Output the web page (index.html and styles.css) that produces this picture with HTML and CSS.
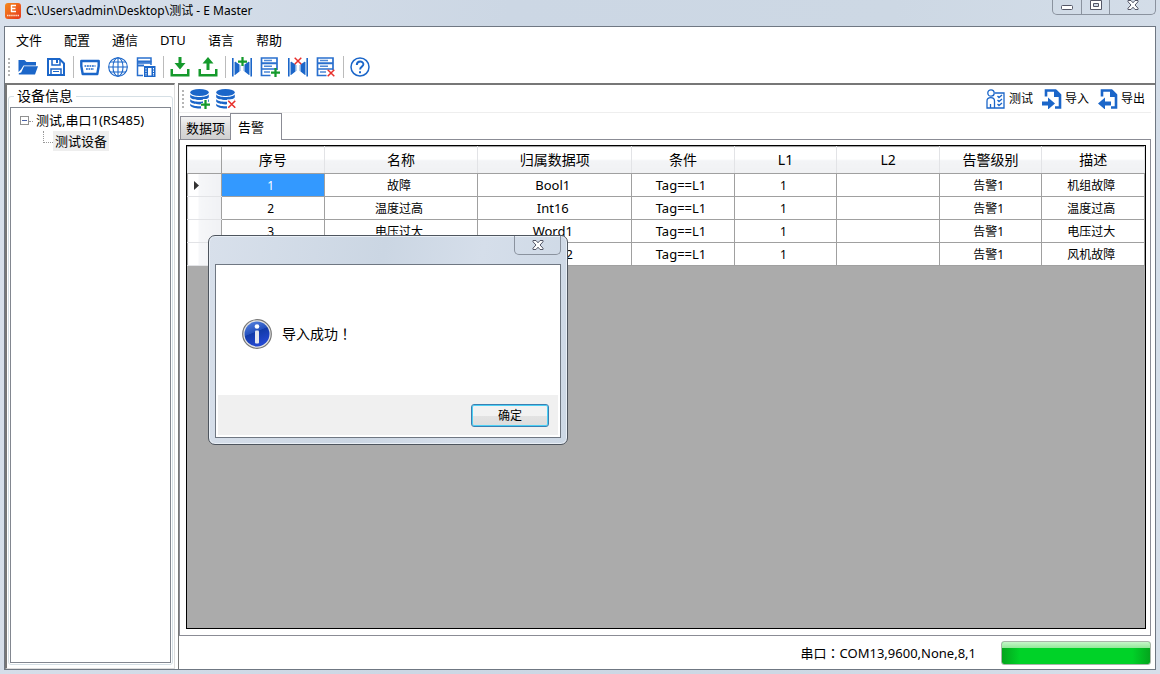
FILE: index.html
```html
<!DOCTYPE html>
<html lang="zh-CN">
<head>
<meta charset="utf-8">
<title>E Master</title>
<link rel="stylesheet" href="styles.css">
</head>
<body>
<svg class="defs" aria-hidden="true">
  <symbol id="plus" viewBox="0 0 8 8"><path d="M3 0h2v3h3v2H5v3H3V5H0V3h3z" fill="#159a2c"/></symbol>
  <symbol id="cross" viewBox="0 0 8 8"><path d="M.7.7l6.6 6.6M7.3.7L.7 7.3" stroke="#e8302c" stroke-width="1.5"/></symbol>
  <symbol id="db" viewBox="0 0 20 20">
    <ellipse cx="9.500" cy="3.500" rx="9.300" ry="3.400" fill="#1b66c9"/>
    <path d="M.2 5.200c2 3.700 16.600 3.700 18.600 0v3c-2 3.700-16.600 3.700-18.600 0zM.2 10c2 3.700 16.600 3.700 18.600 0v2.600c-2 3.700-16.600 3.700-18.600 0zM.2 14.500c2 3.700 16.600 3.700 18.600 0v2c-2 4-16.600 4-18.600 0z" fill="#1b66c9"/>
  </symbol>
  <symbol id="link" viewBox="0 0 20 20">
    <path d="M0 1h1.600v18.500H0zM18.400 1H20v18.500h-1.600zM3 4.500l4.500 3v7L3 18zM17 4.500l-4.500 3v7L17 18z" fill="#1b66c9"/>
    <path d="M2.300 5v13M17.700 5v13M8 8v6M12 8v6" stroke="#78a8e3"/>
  </symbol>
  <symbol id="rows" viewBox="0 0 20 20">
    <path d="M1.500 1h15.500v5H1.500zM1.500 6.500h15.500v5.500H1.500zM1.500 12.500v6h9M17 11v2" fill="none" stroke="#2a70ce" stroke-width="1.700"/>
    <path d="M4 3.500h8M4 9.200h8M4 15h6" stroke="#4d88d6" stroke-width="1.500"/>
  </symbol>
  <symbol id="page" viewBox="0 0 20 20">
    <path d="M4 7.500V1.500h9.500L18 6v12.500h-5" fill="none" stroke="#1b66c9" stroke-width="2.600"/>
    <path d="M12 1h2.500L19 5.500V8h-7z" fill="#1b66c9"/>
  </symbol>
  <symbol id="close" viewBox="0 0 12 10">
    <path d="M1 .5h3l2 2.300L8 .5h3v1.300L8 5l3 3.200v1.300H8L6 7.200 4 9.500H1V8.200L4 5 1 1.800z" fill="#fff" stroke="#535666"/>
  </symbol>
</svg>
<div class="window">
  <header class="titlebar">
    <svg class="app-logo" viewBox="0 0 16 16" aria-hidden="true"><defs><linearGradient id="orange" x2="1" y2="1"><stop stop-color="#f48a1c"/><stop offset="1" stop-color="#e6361e"/></linearGradient></defs><rect width="16" height="16" rx="3" fill="url(#orange)"/><path d="M6 2.500h5M6 5.500h4.500M6 8.500h5M6.500 2v7" stroke="#fff" stroke-width="1.400"/><path d="M2 12.500h12" stroke="#ffdcc8" stroke-width="1.500" stroke-dasharray="1.500 .6"/></svg>
    <h1 class="title">C:\Users\admin\Desktop\测试 - E Master</h1>
    <div class="caption">
      <button type="button" aria-label="最小化"><svg width="12" height="6" viewBox="0 0 12 6"><rect x=".5" y=".5" width="11" height="4" rx="1" fill="#fff" stroke="#535666"/></svg></button>
      <button type="button" aria-label="最大化"><svg width="12" height="10" viewBox="0 0 12 10"><path d="M.5.5h11v9H.5zM3.500 3.500v3h5v-3z" fill="#fff" fill-rule="evenodd" stroke="#535666"/></svg></button>
      <button type="button" class="wide" aria-label="关闭"><svg width="12" height="10"><use href="#close"/></svg></button>
    </div>
  </header>
  <div class="client">
    <nav class="menu">
      <button type="button">文件</button><button type="button">配置</button><button type="button">通信</button><button type="button">DTU</button><button type="button">语言</button><button type="button">帮助</button>
    </nav>
    <div class="toolbar" role="toolbar">
      <span class="grip"></span>
      <button type="button" aria-label="打开"><svg viewBox="0 0 20 20"><path d="M.5 3h6l2 2h9.500v3.500H5.500L3 12.500.5 15z" fill="#1b66c9"/><path d="M6 9.300h14L17 17.500H.8v-1.200l2.400-.8z" fill="#1b66c9"/></svg></button>
      <button type="button" aria-label="保存"><svg viewBox="0 0 20 20"><path d="M2 2h11.500L18 6.500V18H2z" fill="none" stroke="#1b66c9" stroke-width="2"/><path d="M6 2v6h8V2M5 18v-6h10v6" fill="none" stroke="#1b66c9" stroke-width="1.500"/><path d="M10 3h2v3h-2zM7 14h6v1H7z" fill="#1b66c9"/></svg></button>
      <span class="sep"></span>
      <button type="button" aria-label="串口"><svg viewBox="0 0 20 20"><path d="M1.300 4h17.400v5l-1.400 8H2.700L1.300 9z" fill="#fff" stroke="#1b66c9" stroke-width="2.400" stroke-linejoin="round"/><path d="M4.500 9h11M6 12h8" stroke="#1b66c9" stroke-width="1.500" stroke-dasharray="1.800 .7"/></svg></button>
      <button type="button" aria-label="网络"><svg viewBox="0 0 20 20" fill="none" stroke="#1b66c9" stroke-width="1.100"><circle cx="10" cy="10" r="9.300"/><ellipse cx="10" cy="10" rx="5" ry="9.300"/><path d="M10 .7v18.600M.7 10h18.600M2.200 5h15.600M2.200 15h15.600"/></svg></button>
      <button type="button" aria-label="模板"><svg viewBox="0 0 20 20"><path d="M1.500 1h13.500v5H1.500zM1.500 6v12.500h5.500M15 5v3" fill="none" stroke="#2a70ce" stroke-width="1.500"/><path d="M1 4.500h14.500M1 8.500h7" stroke="#2a70ce" stroke-width="2"/><path d="M8 9h11.500v11H8z" fill="#1b66c9"/><path d="M12 11h3.500v7.500H12z" fill="#fff"/><path d="M10 11v8M17.500 11v8" stroke="#fff" stroke-dasharray="1.500 1"/></svg></button>
      <span class="sep"></span>
      <button type="button" aria-label="下载"><svg viewBox="0 0 20 20" fill="#159a2c"><path d="M8.500 0h3v6h4L10 12.500 4.500 6h4zM.5 12H3v5h14v-5h2.500v7.500H.5z"/></svg></button>
      <button type="button" aria-label="上传"><svg viewBox="0 0 20 20" fill="#159a2c"><path d="M8.500 13h3V6.500h4L10 0 4.500 6.500h4zM.5 12H3v5h14v-5h2.500v7.500H.5z"/></svg></button>
      <span class="sep"></span>
      <button type="button" aria-label="添加通道"><svg viewBox="0 0 20 20"><use href="#link"/><use href="#plus" x="6" y="0" width="9" height="9"/></svg></button>
      <button type="button" aria-label="添加设备"><svg viewBox="0 0 20 20"><use href="#rows"/><use href="#plus" x="11" y="11" width="9" height="9"/></svg></button>
      <button type="button" aria-label="删除通道"><svg viewBox="0 0 20 20"><use href="#link"/><use href="#cross" x="6" y="0" width="8" height="8"/></svg></button>
      <button type="button" aria-label="删除设备"><svg viewBox="0 0 20 20"><use href="#rows"/><use href="#cross" x="11" y="12" width="8" height="8"/></svg></button>
      <span class="sep"></span>
      <button type="button" aria-label="帮助"><svg viewBox="0 0 20 20" fill="none" stroke="#1b66c9"><circle cx="10" cy="10" r="9" stroke-width="1.500"/><path d="M6.800 8c0-4.600 6.600-4.500 6.600-.7 0 2.400-3.300 2.300-3.300 5.200" stroke-width="1.900"/><path d="M10 14.200v2" stroke-width="2"/></svg></button>
    </div>
    <div class="workspace">
      <aside class="sidebar">
        <fieldset class="group">
          <legend>设备信息</legend>
          <ul class="tree">
            <li><div class="node"><button type="button" class="expander" aria-label="折叠"></button><span>测试,串口1(RS485)</span></div>
              <ul><li class="child"><span class="current">测试设备</span></li></ul>
            </li>
          </ul>
        </fieldset>
      </aside>
      <main class="content">
        <div class="toolbar data-bar" role="toolbar">
          <span class="grip"></span>
          <button type="button" aria-label="添加数据"><svg viewBox="0 0 20 20"><use href="#db"/><path d="M13 10h5v3h2v7h-9v-6h2z" fill="#fff"/><use href="#plus" x="11" y="11" width="9" height="9"/></svg></button>
          <button type="button" aria-label="删除数据"><svg viewBox="0 0 20 20"><use href="#db"/><path d="M11 10.500h9V20h-9z" fill="#fff"/><use href="#cross" x="11.500" y="11" width="8.500" height="8.500"/></svg></button>
          <div class="actions">
            <button type="button"><svg viewBox="0 0 20 20" fill="none" stroke="#1b66c9" stroke-width="1.300"><circle cx="5" cy="4" r="3.200"/><path d="M1 19v-7c0-4.500 7.500-4.500 7.500 0v7zM4.500 15v4M9 4h9v15H9"/><path d="M11.500 7l1.500 1.500L16 6M11.500 11l1.500 1.500 3-2.500M11.500 15l1.500 1.500 3-2.500"/></svg>测试</button>
            <button type="button"><svg viewBox="0 0 20 20"><use href="#page"/><path d="M0 12.500h6V8.500l7 6-7 6v-4H0z" fill="#1b66c9"/></svg>导入</button>
            <button type="button"><svg viewBox="0 0 20 20"><use href="#page"/><path d="M13 12.500H7V8.500l-7 6 7 6v-4h6z" fill="#1b66c9"/></svg>导出</button>
          </div>
        </div>
        <div class="tabs" role="tablist">
          <button type="button" role="tab" aria-selected="false">数据项</button>
          <button type="button" role="tab" aria-selected="true">告警</button>
        </div>
        <section class="tab-panel">
          <div class="grid">
            <table>
              <colgroup><col class="c-mark"><col class="c-std"><col class="c-wide"><col class="c-wide"><col class="c-std"><col class="c-std"><col class="c-std"><col class="c-std"><col class="c-std"></colgroup>
              <thead><tr><th></th><th>序号</th><th>名称</th><th>归属数据项</th><th>条件</th><th>L1</th><th>L2</th><th>告警级别</th><th>描述</th></tr></thead>
              <tbody>
                <tr><th><svg class="marker" viewBox="0 0 5 9"><path d="M0 0l5 4.500L0 9z" fill="#333"/></svg></th><td class="selected">1</td><td>故障</td><td class="code">Bool1</td><td class="code">Tag==L1</td><td>1</td><td></td><td>告警1</td><td>机组故障</td></tr>
                <tr><th></th><td>2</td><td>温度过高</td><td class="code">Int16</td><td class="code">Tag==L1</td><td>1</td><td></td><td>告警1</td><td>温度过高</td></tr>
                <tr><th></th><td>3</td><td>电压过大</td><td class="code">Word1</td><td class="code">Tag==L1</td><td>1</td><td></td><td>告警1</td><td>电压过大</td></tr>
                <tr><th></th><td>4</td><td>风机故障</td><td class="code">Word2</td><td class="code">Tag==L1</td><td>1</td><td></td><td>告警1</td><td>风机故障</td></tr>
              </tbody>
            </table>
          </div>
        </section>
        <footer class="status">
          <label for="progress">串口<span class="mark" lang="zh-TW">：</span>COM13,9600,None,8,1</label>
          <progress id="progress" value="100" max="100"></progress>
        </footer>
      </main>
    </div>
  </div>
  <div class="dialog" role="dialog" aria-label="提示">
    <div class="dialog-title"><button type="button" class="dialog-close" aria-label="关闭"><svg width="12" height="10"><use href="#close"/></svg></button></div>
    <div class="dialog-frame">
      <div class="message">
        <svg width="30" height="30" viewBox="0 0 30 30" aria-hidden="true"><defs><linearGradient id="blue" x2=".4" y2="1"><stop stop-color="#5f8ae4"/><stop offset=".5" stop-color="#2350bd"/><stop offset=".52" stop-color="#123aa8"/><stop offset="1" stop-color="#2448d0"/></linearGradient></defs><circle cx="15" cy="15" r="14.300" fill="#e4e4e4" stroke="#777" stroke-width="1.200"/><circle cx="15" cy="15" r="12.500" fill="url(#blue)"/><circle cx="15" cy="7.500" r="2.300" fill="#fff"/><rect x="13" y="11.500" width="4" height="13" rx="1" fill="#e6e8ee"/></svg>
        <p>导入成功<span class="mark" lang="zh-TW">！</span></p>
      </div>
      <div class="dialog-actions"><button type="button" class="ok">确定</button></div>
    </div>
  </div>
</div>
</body>
</html>
```
FILE: styles.css
```css
* { box-sizing: border-box; }
body {
  margin: 0;
  color: #000;
  font: 13px/20px "Noto Sans", "Noto Sans CJK SC", sans-serif;
}
button {
  padding: 0;
  border: 0;
  background: none;
  color: inherit;
  font: inherit;
}
ul { list-style: none; margin: 0; padding: 0; }
svg { display: block; flex: none; }
.defs { position: absolute; width: 0; height: 0; }
.mark { font-family: "Noto Sans CJK TC", sans-serif; line-height: 1; }

.window {
  position: relative;
  display: flex;
  flex-direction: column;
  min-height: 100vh;
  padding: 0 4px 4px;
  background: linear-gradient(100deg, #d8e0eb, #ccd7e4 40%, #cdd8e4 70%, #d6dfea);
}
.titlebar { display: flex; align-items: flex-start; height: 26px; padding-left: 1px; }
.app-logo { width: 16px; height: 16px; margin-top: 3px; }
.title { flex: 1; margin: 1px 0 0 5px; font-size: 12px; font-weight: 400; }
.caption {
  display: flex;
  height: 15px;
  border: 1px solid #8a929e;
  border-top: 0;
  border-radius: 0 0 5px 5px;
}
.caption button { display: flex; justify-content: center; width: 28px; }
.caption button + button { border-left: 1px solid #8a929e; }
.caption button:first-child { padding-top: 5px; }
.caption .wide { width: 46px; }

.client {
  flex: 1;
  display: flex;
  flex-direction: column;
  border: 1px solid #6f7782;
  background: #fff;
}
.menu { display: flex; gap: 22px; padding: 3px 11px 1px; }
.toolbar { display: flex; align-items: center; gap: 8px; height: 32px; padding-left: 3px; }
.toolbar > button > svg, .actions svg { width: 20px; height: 20px; }
.grip {
  width: 2px;
  height: 18px;
  background: repeating-linear-gradient(#b5b5b5 0 2px, transparent 2px 4px);
}
.sep { width: 1px; height: 22px; margin: 0 -2px 0 -1px; background: #bbb; }

.workspace { flex: 1; display: flex; gap: 3px; }
.sidebar {
  width: 170px;
  padding: 1px 1px 3px;
  border: 2px solid #777;
  border-width: 2px 1px 1px 2px;
  border-right-color: #ddd;
  border-bottom-color: #ddd;
}
.group {
  display: flex;
  flex-direction: column;
  height: 100%;
  min-width: 0;
  margin: 0;
  padding: 1px 1px 1px;
  border: 1px solid #d5dfe5;
  border-radius: 3px;
}
.group legend { margin-left: 4px; padding: 0 3px; font-size: 14px; }
.tree { height: 100%; border: 1px solid #828790; padding-top: 1px; }
.tree ul { padding: 0; }
.node { display: flex; align-items: center; height: 22px; padding-left: 9px; white-space: nowrap; }
.expander { width: 9px; height: 9px; border: 1px solid #919191; background: linear-gradient(#4b63a7, #4b63a7) center / 5px 1px no-repeat #fff; }
.node span::before { content: ""; display: inline-block; width: 4px; margin-right: 3px; border-top: 1px dotted #999; vertical-align: middle; }
.child { display: flex; padding-left: 32px; }
.child::before { content: ""; width: 9px; height: 11px; border: 1px dotted #999; border-width: 0 0 1px 1px; }
.current { padding: 0 2px; background: #eee; }

.content {
  flex: 1;
  display: flex;
  flex-direction: column;
  min-width: 0;
  padding-right: 4px;
  border: 2px solid #777;
  border-width: 2px 0 0 1px;
}
.data-bar { height: 28px; gap: 6px; border-bottom: 1px solid #eee; }
.actions { display: flex; gap: 9px; margin-left: auto; padding-right: 6px; font-size: 12px; }
.actions button { display: flex; align-items: center; gap: 3px; }
.tabs { display: flex; align-items: flex-end; padding-left: 1px; }
.tabs button {
  height: 23px;
  padding: 0 5px;
  border: 1px solid #8b8c95;
  border-width: 1px 0 0 1px;
  background: linear-gradient(#f3f3f3, #ddd 50%, #d0d0d0);
}
.tabs [aria-selected="true"] {
  z-index: 1;
  height: 27px;
  margin-bottom: -1px;
  padding: 0 17px 1px 7px;
  border-right-width: 1px;
  background: #fff;
}
.tab-panel { flex: 1; display: flex; border: 1px solid #8b8c95; padding: 5px 4px 6px 6px; }
.grid { flex: 1; min-width: 0; border: 1px solid #000; background: #ababab; }
.grid table { width: 100%; table-layout: fixed; border-collapse: collapse; font-size: 12px; }
.c-mark { width: 34px; }
.c-std { width: 12%; }
.c-wide { width: 18%; }
.grid th, .grid td {
  height: 23px;
  padding: 0;
  border: 1px solid #a0a0a0;
  text-align: center;
  font-weight: 400;
  line-height: 22px;
}
.grid td { background: #fff; }
.grid tbody td { padding: 1px 4px 0 0; line-height: 21px; }
.grid .code { font-size: 13px; }
.grid thead th {
  height: 27px;
  border-color: #a0a0a0 #e2e3e6;
  background: linear-gradient(#fff 45%, #f3f4f6 50%, #f0f1f3);
  font-size: 14px;
  line-height: 26px;
}
.grid thead th:first-child { border-right-color: #a0a0a0; }
.grid tbody th {
  border-color: #e2e3e6 #a0a0a0;
  background: linear-gradient(90deg, #fff 30%, #f6f7f9 31%, #f0f1f4);
}
.marker { width: 5px; height: 9px; margin-left: 6px; }
.grid .selected { background: #39f; color: #fff; }

.status { display: flex; align-items: center; justify-content: flex-end; gap: 25px; height: 33px; }
progress { appearance: none; width: 150px; height: 24px; border: 1px solid #a9b5a9; border-radius: 3px; overflow: hidden; }
progress::-webkit-progress-bar { background: #e6e6e6; }
progress::-webkit-progress-value {
  background:
    linear-gradient(#c6f7c9, #91e798 28%, transparent 29%),
    linear-gradient(90deg, #04a51d, #00d228 12%, #00d228 88%, #04a51d);
}

.dialog {
  position: absolute;
  top: 235px;
  left: 208px;
  width: 360px;
  padding: 0 6px 6px;
  border: 1px solid #4e555e;
  border-radius: 7px;
  background: linear-gradient(100deg, #d8e0eb, #cbd6e3 45%, #d5deea 70%, #cdd8e5);
  box-shadow: inset 0 0 0 1px #e9eff6;
}
.dialog-title { display: flex; justify-content: flex-end; height: 28px; }
.dialog-close {
  display: flex;
  justify-content: center;
  width: 47px;
  height: 19px;
  padding-top: 4px;
  border: 1px solid #8a929e;
  border-top: 0;
  border-radius: 0 0 5px 5px;
}
.dialog-frame { padding: 0 2px 2px; border: 1px solid #6f7782; background: #fff; }
.message { display: flex; align-items: center; gap: 10px; height: 130px; padding: 7px 24px 0; font-size: 14px; }
.message p { margin: 0; }
.dialog-actions { display: flex; justify-content: flex-end; padding: 9px 9px 8px; background: #f0f0f0; }
.ok {
  width: 78px;
  height: 23px;
  border: 1px solid #3c7fb1;
  border-radius: 3px;
  background: linear-gradient(#f2f2f2 50%, #e3e3e3 51%, #ddd);
  box-shadow: inset 0 0 0 1px #4cd0f5;
  font-size: 12px;
}
```
